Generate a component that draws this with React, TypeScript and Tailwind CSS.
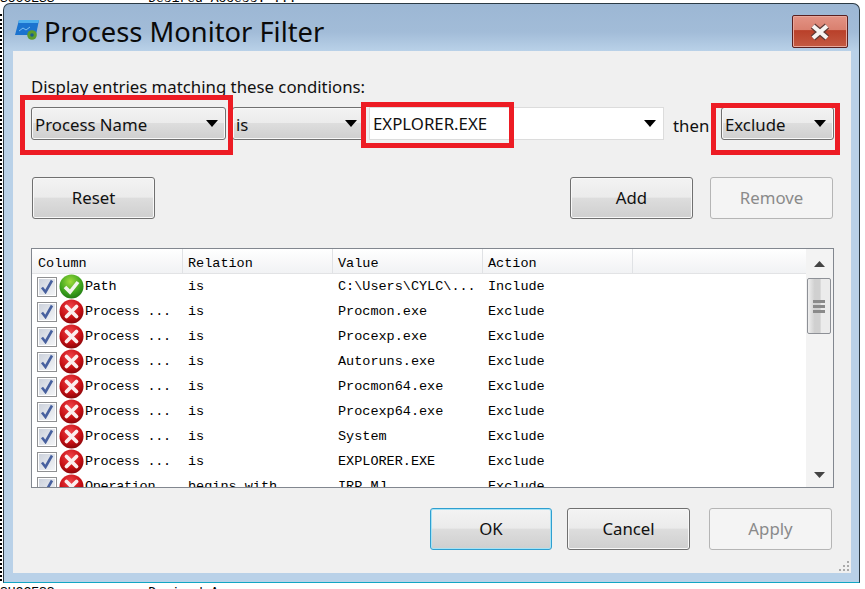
import React from 'react';

const ui = "font-['Noto_Sans',sans-serif]";
const btnOn = 'border border-[#707070] rounded-[3px] shadow-[inset_0_0_0_1px_#f8f8f8] bg-[linear-gradient(#f3f3f3_0%,#ebebeb_48%,#dddddd_50%,#cfcfcf_100%)] text-[#111]';
const btnOff = 'border border-[#b5b5b5] rounded-[3px] bg-[#f4f4f4] text-[#8a8a8a]';

const rows = [
  ['Path', 'is', 'C:\\Users\\CYLC\\...', 'Include', true],
  ['Process ...', 'is', 'Procmon.exe', 'Exclude', false],
  ['Process ...', 'is', 'Procexp.exe', 'Exclude', false],
  ['Process ...', 'is', 'Autoruns.exe', 'Exclude', false],
  ['Process ...', 'is', 'Procmon64.exe', 'Exclude', false],
  ['Process ...', 'is', 'Procexp64.exe', 'Exclude', false],
  ['Process ...', 'is', 'System', 'Exclude', false],
  ['Process ...', 'is', 'EXPLORER.EXE', 'Exclude', false],
  ['Operation', 'begins with', 'IRP_MJ_', 'Exclude', false],
] as const;

const Arrow = () => (
  <svg width="12" height="7" viewBox="0 0 12 7">
    <path d="M0 0h12L6 7z" fill="#000" />
  </svg>
);

const Combo = ({ label, width }: { label: string; width: string }) => (
  <div className={`${width} ${btnOn} h-[33px] flex items-center justify-between pl-[3px] pr-[7px] text-[16.8px] shrink-0`}>
    <span className="pt-[2px]">{label}</span>
    <Arrow />
  </div>
);

const Btn = ({ label, off, cls = '' }: { label: string; off?: boolean; cls?: string }) => (
  <div className={`h-[42px] flex items-center justify-center text-[16.8px] shrink-0 ${off ? btnOff : btnOn} ${cls}`}>{label}</div>
);

const CheckBox = () => (
  <div className="w-[20px] h-[20px] shrink-0 border border-[#8f9092] bg-[linear-gradient(135deg,#c9cfda,#f6f7f9)] shadow-[inset_0_0_0_1px_#fff] flex items-center justify-center">
    <svg width="14" height="15" viewBox="0 0 14 15">
      <path d="M2 8.5 L5.5 13 L12 1.5" fill="none" stroke="#47609f" strokeWidth="2.6" />
    </svg>
  </div>
);

const StatusIcon = ({ ok }: { ok: boolean }) => (
  <svg width="25" height="25" viewBox="0 0 25 25" className="shrink-0">
    <defs>
      <radialGradient id="redBall" cx="45%" cy="30%" r="75%">
        <stop offset="0%" stopColor="#f0444a" />
        <stop offset="60%" stopColor="#c80f14" />
        <stop offset="100%" stopColor="#7d0508" />
      </radialGradient>
      <radialGradient id="greenBall" cx="45%" cy="30%" r="75%">
        <stop offset="0%" stopColor="#9fdc3c" />
        <stop offset="60%" stopColor="#3fa51e" />
        <stop offset="100%" stopColor="#1c7412" />
      </radialGradient>
    </defs>
    <circle cx="12.5" cy="12.5" r="12" fill={ok ? 'url(#greenBall)' : 'url(#redBall)'} />
    {ok ? (
      <path d="M6 13 L11 18 L19 8" fill="none" stroke="#f2f5ee" strokeWidth="3.6" />
    ) : (
      <path d="M7.5 7.5 L17.5 17.5 M17.5 7.5 L7.5 17.5" fill="none" stroke="#fbeeee" strokeWidth="3.8" strokeLinecap="round" />
    )}
  </svg>
);

const RedBox = ({ cls }: { cls: string }) => (
  <div className={`absolute border-[5px] border-[#ed1c24] pointer-events-none ${cls}`} />
);

export default function App() {
  return (
    <div className={`relative w-[865px] h-[589px] overflow-hidden bg-white ${ui}`}>
      {/* scraps of the log window behind the dialog */}
      <div className="absolute left-0 top-[-11px] font-['Liberation_Mono',monospace] text-[13px] whitespace-pre text-black">SUCCESS            Desired Access: ...</div>
      <div className="absolute left-0 top-[583px] font-['Liberation_Mono',monospace] text-[13px] whitespace-pre text-black">SUCCESS            Desired A</div>
      <div className="absolute left-0 top-[14px] bottom-[8px] w-[3px] border-l-2 border-dotted border-black" />

      <div className="relative ml-[3px] mt-[3px] w-[857px] h-[580px] border border-[#2b3a44] border-b-[#12a5c4] rounded-t-[7px] flex flex-col pl-[9px] pr-[8px] pb-[9px] bg-[linear-gradient(#9cb7d4_0px,#a2bcd8_28px,#b9d1e8_47px)]">
        <div className="h-[47px] flex items-center shrink-0">
          <svg width="24" height="22" viewBox="0 0 24 22" className="ml-[2px] mt-[5px] shrink-0">
            <path d="M4 1 H24 L21 16 H0 Z" fill="#1b73cf" />
            <path d="M4 1 H24 L23.4 4 H3.4 Z" fill="#4fb0ee" />
            <path d="M4 12 L8 9 L11 11 L15 8" fill="none" stroke="#7fc0f0" strokeWidth="1" />
            <circle cx="17" cy="16" r="4.8" fill="#5c9c2e" />
            <circle cx="17" cy="16" r="1.8" fill="#1d5c8c" />
          </svg>
          <span className="ml-[5px] mt-[8px] text-[27.3px] text-[#0a0a0a] leading-none">Process Monitor Filter</span>
          <div className="ml-auto mr-[3px] mt-[11px] self-start w-[56px] h-[33px] border border-[#5a2020] rounded-[2px] bg-[linear-gradient(#e39385_0%,#d9806f_45%,#b9402a_47%,#c45a42_100%)] shadow-[inset_0_0_0_1px_#e8a89c] flex items-center justify-center">
            <svg width="22" height="18" viewBox="0 0 22 18">
              <path d="M4 3 L18 15 M18 3 L4 15" stroke="#5e3a36" strokeWidth="6.5" />
              <path d="M4 3 L18 15 M18 3 L4 15" stroke="#f7f4f2" strokeWidth="4.2" />
            </svg>
          </div>
        </div>

        <div className="relative flex-1 bg-[#f0f0f0] flex flex-col px-[18px] text-[16.8px] text-[#111]">
          <div className="h-[24px] mt-[24px] leading-[24px]">Display entries matching these conditions:</div>

          <div className="flex items-center mt-[8px] h-[33px]">
            <Combo label="Process Name" width="w-[195px]" />
            <Combo label="is" width="w-[133px] ml-[6px]" />
            <div className="ml-[4px] w-[295px] h-[33px] shrink-0 bg-white border border-[#dcdcdc] flex items-center justify-between pl-[3px] pr-[7px]">
              <span>EXPLORER.EXE</span>
              <Arrow />
            </div>
            <span className="ml-[9px] w-[48px] shrink-0 pt-[5px]">then</span>
            <Combo label="Exclude" width="w-[113px]" />
          </div>

          <div className="flex mt-[37px] ml-[1px]">
            <Btn label="Reset" cls="w-[123px]" />
            <Btn label="Add" cls="w-[123px] ml-auto" />
            <Btn label="Remove" off cls="w-[123px] ml-[17px]" />
          </div>

          <div className="mt-[29px] w-[803px] h-[240px] shrink-0 border border-[#82878f] bg-white flex overflow-hidden font-['Liberation_Mono',monospace] text-[13.5px] text-black">
            <div className="flex-1 min-w-0 flex flex-col">
              <div className="h-[25px] shrink-0 flex border-b border-[#e2e3e5] bg-[linear-gradient(#ffffff,#f1f2f4)]">
                {['Column', 'Relation', 'Value', 'Action'].map((h, i) => (
                  <div key={h} className={`leading-[30px] border-r border-[#e0e2e5] ${i === 0 ? 'w-[151px] pl-[6px]' : 'w-[150px] pl-[5px]'}`}>{h}</div>
                ))}
              </div>
              {rows.map((r, i) => (
                <div key={i} className="h-[25px] shrink-0 flex items-center">
                  <div className="w-[151px] flex items-center pl-[5px] shrink-0">
                    <CheckBox />
                    <div className="ml-[2px]"><StatusIcon ok={r[4]} /></div>
                    <span className="ml-[1px] pt-[2px] whitespace-pre tracking-[-0.3px]">{r[0]}</span>
                  </div>
                  <div className="w-[150px] pl-[5px] pt-[2px] whitespace-pre shrink-0">{r[1]}</div>
                  <div className="w-[150px] pl-[5px] pt-[2px] whitespace-pre shrink-0">{r[2]}</div>
                  <div className="w-[150px] pl-[5px] pt-[2px] whitespace-pre shrink-0">{r[3]}</div>
                </div>
              ))}
            </div>
            <div className="w-[27px] shrink-0 bg-[#f3f3f3] flex flex-col pl-[1px]">
              <div className="h-[29px] flex items-center justify-center shrink-0 pr-[2px]">
                <svg width="11" height="6" viewBox="0 0 11 6"><path d="M5.5 0 L11 6 H0 Z" fill="#444" /></svg>
              </div>
              <div className="w-[24px] h-[56px] border border-[#8d9096] rounded-[2px] bg-[linear-gradient(90deg,#efefef,#d0d0d0_30%,#d0d0d0_55%,#ececec_60%)] flex flex-col items-center justify-center gap-[2px]">
                <div className="w-[12px] h-[3px] bg-[#8a8a8a]" />
                <div className="w-[12px] h-[3px] bg-[#8a8a8a]" />
                <div className="w-[12px] h-[3px] bg-[#8a8a8a]" />
              </div>
              <div className="mt-auto h-[25px] flex items-center justify-center pr-[2px]">
                <svg width="11" height="6" viewBox="0 0 11 6"><path d="M0 0 H11 L5.5 6 Z" fill="#444" /></svg>
              </div>
            </div>
          </div>

          <div className="flex mt-[20px] ml-[399px]">
            <Btn label="OK" cls="w-[122px] !border-[#2f9fd0] !shadow-[inset_0_0_0_1px_#a6e3f5]" />
            <Btn label="Cancel" cls="w-[123px] ml-[15px]" />
            <Btn label="Apply" off cls="w-[123px] ml-[19px]" />
          </div>

          <svg width="12" height="12" viewBox="0 0 12 12" className="absolute right-[1px] bottom-[1px]">
            <path d="M9 1h2v2H9zM5 5h2v2H5zM9 5h2v2H9zM1 9h2v2H1zM5 9h2v2H5zM9 9h2v2H9z" fill="#a9a9a9" />
          </svg>
        </div>
      </div>

      <RedBox cls="left-[20px] top-[95px] w-[213px] h-[60px]" />
      <RedBox cls="left-[361px] top-[102px] w-[153px] h-[46px]" />
      <RedBox cls="left-[711px] top-[103px] w-[129px] h-[52px]" />
    </div>
  );
}
